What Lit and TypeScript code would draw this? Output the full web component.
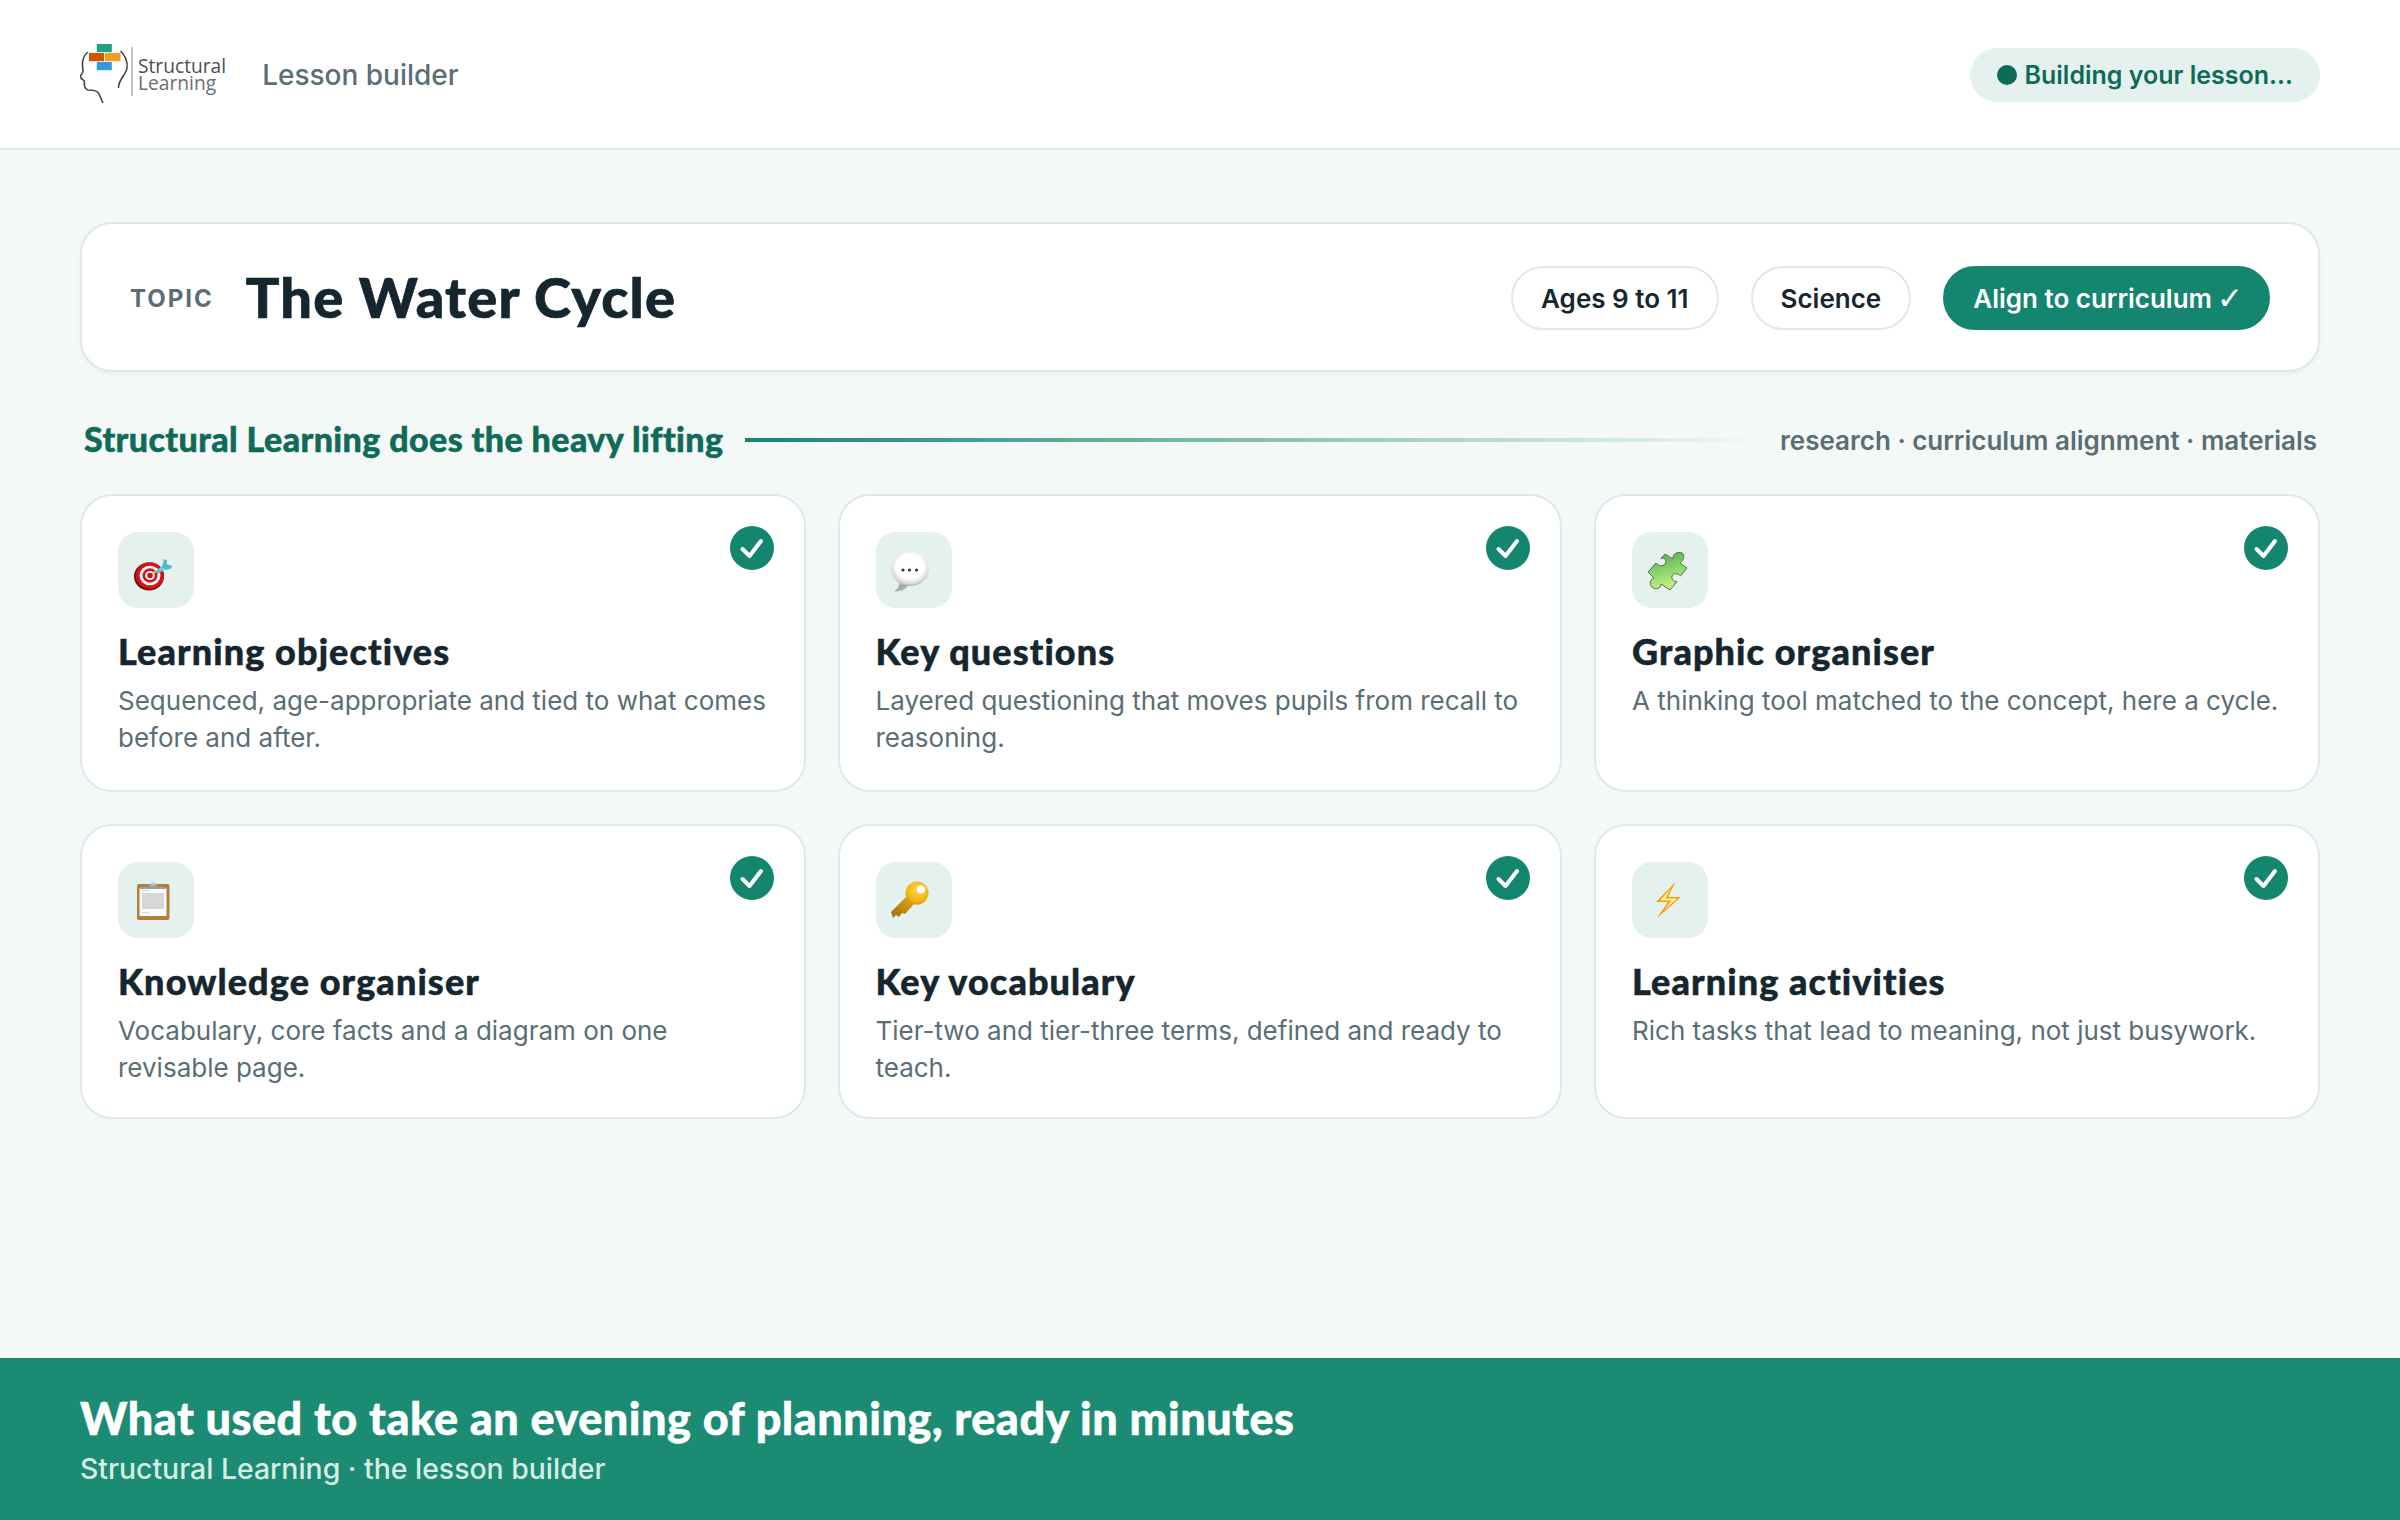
import { LitElement, html, css, svg } from 'lit';
import { customElement } from 'lit/decorators.js';

const ICONS = {
  target: svg`
    <defs>
      <linearGradient id="dartG" x1="0" y1="1" x2="1" y2="0"><stop offset="0" stop-color="#3fb4c4"/><stop offset="1" stop-color="#8fdde2"/></linearGradient>
    </defs>
    <ellipse cx="31" cy="44.5" rx="15" ry="14" fill="#7c0d0d"/>
    <ellipse cx="32" cy="43.5" rx="14" ry="13.2" fill="#d3151b"/>
    <ellipse cx="32" cy="43.5" rx="10.4" ry="9.8" fill="#fff"/>
    <ellipse cx="32" cy="43.5" rx="7.6" ry="7.2" fill="#d3151b"/>
    <ellipse cx="32" cy="43.5" rx="4.8" ry="4.6" fill="#fff"/>
    <ellipse cx="32" cy="43.5" rx="2.8" ry="2.7" fill="#c2151b"/>
    <path d="M35 41.5 L38 39" stroke="#f0b429" stroke-width="2.4"/>
    <path d="M37 40 L44.5 33.5 L47.5 37 L40 42 Z" fill="url(#dartG)"/>
    <path d="M44 35 L46 27 L49 28.5 L48.5 32 L54 34 L53 36.5 L47.5 38 Z" fill="#4fbccb"/>`,
  speech: svg`
    <defs>
      <radialGradient id="bubG" cx=".5" cy=".42" r=".58"><stop offset=".62" stop-color="#fff"/><stop offset=".9" stop-color="#d5d8d7"/><stop offset="1" stop-color="#a8adac"/></radialGradient>
    </defs>
    <path d="M24 48 Q24 55 18.5 59.5 Q27 60 33 53 Z" fill="#a9aead"/>
    <ellipse cx="34" cy="37" rx="19" ry="17" fill="url(#bubG)"/>
    <circle cx="27" cy="38" r="1.6" fill="#333"/><circle cx="33.5" cy="38" r="1.6" fill="#333"/><circle cx="40.5" cy="38" r="1.6" fill="#333"/>`,
  puzzle: svg`
    <defs>
      <linearGradient id="puzG" x1=".35" y1="0" x2=".6" y2="1"><stop offset="0" stop-color="#4fb556"/><stop offset="1" stop-color="#cdf585"/></linearGradient>
    </defs>
    <path d="M33 22 L41 27 C40 22 46 19 50 21 C53 23 52 28 48 31 L55 36 L48.5 44 C46 41 41 41 40 44 C39 47 42 50 45 49.5 L38 58 L29 52 C29 57 23 58 20 55 C17 52 18 47 22 46 L16 40 L24 31 C26 34 31 35 33 32 C35 29 33 25 29 26.5 Z" fill="url(#puzG)" stroke="#5c6f45" stroke-width="1"/>`,
  clipboard: svg`
    <defs>
      <linearGradient id="clipG" x1="0" y1="0" x2="0" y2="1"><stop offset="0" stop-color="#d5dce4"/><stop offset="1" stop-color="#8d98a5"/></linearGradient>
    </defs>
    <rect x="19" y="22" width="32.5" height="36" rx="2" fill="#b3803a"/>
    <rect x="21.5" y="26" width="27" height="28" fill="#fafafa"/>
    <rect x="24" y="31" width="22" height="16" fill="#c4c7ca" opacity=".7"/>
    <rect x="24" y="28" width="7" height="1" fill="#d2d4d6"/>
    <rect x="24" y="50" width="7" height="1" fill="#d2d4d6"/>
    <rect x="22" y="25" width="26" height="2" fill="#9aa0a6"/>
    <path d="M29 25.5 L32 23 C32 19 38 19 38 23 L41 25.5 Z" fill="url(#clipG)"/>`,
  key: svg`
    <defs>
      <radialGradient id="keyG" cx=".55" cy=".35" r=".75"><stop offset="0" stop-color="#ffd84a"/><stop offset=".7" stop-color="#f0b312"/><stop offset="1" stop-color="#b98008"/></radialGradient>
      <linearGradient id="keyS" x1="1" y1="0" x2="0" y2="1"><stop offset="0" stop-color="#e9ad12"/><stop offset="1" stop-color="#9c6c0a"/></linearGradient>
    </defs>
    <path d="M32 33 L15 50 L17 56 L20 53 L23 55 L26 51 L29 52 L38 42 Z" fill="url(#keyS)"/>
    <circle cx="41" cy="31" r="11.5" fill="url(#keyG)"/>
    <circle cx="45" cy="27.5" r="4" fill="#fff"/>`,
  zap: svg`
    <path d="M43.5 20 L24 40 L36 40 L25 56 L49 35 L36 35 Z" fill="#f59e0b"/>
    <path d="M39 26 L28 38.5 L39.5 38.5 L32 48 L45.5 36.5 L33.5 36.5 Z" fill="#fff2a0"/>`,
};

const CARDS = [
  { icon: ICONS.target, title: 'Learning objectives', desc: 'Sequenced, age-appropriate and tied to what comes before and after.' },
  { icon: ICONS.speech, title: 'Key questions', desc: 'Layered questioning that moves pupils from recall to reasoning.' },
  { icon: ICONS.puzzle, title: 'Graphic organiser', desc: 'A thinking tool matched to the concept, here a cycle.' },
  { icon: ICONS.clipboard, title: 'Knowledge organiser', desc: 'Vocabulary, core facts and a diagram on one revisable page.' },
  { icon: ICONS.key, title: 'Key vocabulary', desc: 'Tier-two and tier-three terms, defined and ready to teach.' },
  { icon: ICONS.zap, title: 'Learning activities', desc: 'Rich tasks that lead to meaning, not just busywork.' },
];

@customElement('app-root')
export class AppRoot extends LitElement {
  static styles = css`
    :host {
      display: block;
      font-family: 'Inter', sans-serif;
      color: #16262e;
    }

    .page {
      display: flex;
      flex-direction: column;
      min-height: 1520px;
      background: #f4f8f7;
    }

    /* header */
    .top {
      box-sizing: border-box;
      height: 150px;
      display: flex;
      align-items: center;
      justify-content: space-between;
      padding: 2px 80px 0;
      background: #fff;
      border-bottom: 2px solid #dcebe6;
    }
    .brand { display: flex; align-items: center; gap: 36px; }
    .logo { display: flex; align-items: center; margin-top: -4px; }
    .logo svg { display: block; width: 56px; height: 62px; }
    .logo-text {
      display: flex;
      flex-direction: column;
      margin: 2px 0 0 2px;
      font-family: 'Open Sans', sans-serif;
      font-size: 19.2px;
      line-height: 17px;
      color: #4a4f52;
    }
    .logo-text span + span { color: #6a6f72; }
    .crumb { font-size: 28px; font-weight: 500; color: #5a6e75; }
    .status {
      display: flex;
      align-items: center;
      gap: 8px;
      height: 54px;
      padding: 0 27px;
      border-radius: 27px;
      background: #e5f1ee;
      color: #0f6b57;
      font-size: 25px;
      font-weight: 600;
    }
    .dot { width: 20px; height: 20px; border-radius: 50%; background: #0f6b57; }

    /* main */
    main { flex: 1; display: flex; flex-direction: column; padding: 72px 80px 0; }

    .topic {
      box-sizing: border-box;
      height: 150px;
      display: flex;
      align-items: center;
      padding: 2px 48px 0;
      background: #fff;
      border: 2px solid #dcebe6;
      border-radius: 32px;
      box-shadow: 0 2px 4px rgba(20, 60, 50, 0.04);
    }
    .topic-label {
      font-size: 24px;
      font-weight: 700;
      letter-spacing: 2px;
      color: #5a6e75;
      margin-right: 32px;
    }
    .topic-title {
      flex: 1;
      padding-bottom: 4px;
      font-family: 'Lato', sans-serif;
      font-size: 56px;
      font-weight: 900;
      letter-spacing: 1.2px;
      -webkit-text-stroke: 0.7px #16262e;
    }
    .chip {
      box-sizing: border-box;
      height: 64px;
      display: flex;
      align-items: center;
      padding: 0 28px;
      margin-left: 32px;
      border: 2px solid #dcebe6;
      border-radius: 32px;
      background: #fff;
      font-size: 26px;
      font-weight: 600;
    }
    .chip.go { background: #14866f; border-color: #14866f; color: #fff; }
    .mark {
      margin: 0 -3px 0 5px;
      font-family: 'DejaVu Sans', sans-serif;
      font-size: 31px;
      line-height: 1;
      font-weight: 400;
    }

    .section {
      display: flex;
      align-items: center;
      height: 36px;
      margin: 50px 0 36px;
      padding: 0 3px 0 4px;
    }
    .section-title {
      padding-bottom: 4px;
      font-family: 'Lato', sans-serif;
      font-size: 34px;
      font-weight: 900;
      letter-spacing: 0.4px;
      color: #0f6b57;
      -webkit-text-stroke: 0.5px #0f6b57;
    }
    .rule {
      flex: 1;
      height: 4px;
      margin: 0 20px 0 21px;
      background: linear-gradient(90deg, #14866f, rgba(20, 134, 111, 0));
    }
    .section-note { font-size: 26px; font-weight: 600; color: #5a6e75; }

    .grid {
      display: grid;
      grid-template-columns: 725.5px 724.5px 726px;
      grid-template-rows: 298px 295px;
      gap: 32px;
    }
    .card {
      position: relative;
      box-sizing: border-box;
      padding: 36px;
      background: #fff;
      border: 2px solid #dcebe6;
      border-radius: 32px;
    }
    .tile {
      width: 76px;
      height: 76px;
      border-radius: 20px;
      background: #e5f1ee;
    }
    .tile svg { display: block; width: 76px; height: 76px; }
    .card h3 {
      margin: 21px 0 0;
      font-family: 'Lato', sans-serif;
      font-size: 36px;
      line-height: 44px;
      font-weight: 900;
      letter-spacing: 1.1px;
      -webkit-text-stroke: 0.5px #16262e;
    }
    .card p {
      margin: 9px 0 0;
      font-size: 26px;
      line-height: 37px;
      color: #5a6e75;
    }
    .tick { position: absolute; top: 30px; right: 30px; width: 44px; height: 44px; }

    /* footer */
    footer {
      box-sizing: border-box;
      height: 162px;
      padding: 33px 80px 0;
      background: #1b8b73;
      color: #fff;
    }
    .foot-title {
      font-family: 'Lato', sans-serif;
      font-size: 45px;
      line-height: 54px;
      font-weight: 900;
      letter-spacing: 0.5px;
      -webkit-text-stroke: 0.5px #fff;
    }
    .foot-sub { margin-top: 6px; font-size: 28.4px; line-height: 36px; font-weight: 500; color: #d6ece5; }
  `;

  render() {
    return html`
      <div class="page">
        <header class="top">
          <div class="brand">
            <div class="logo">
              <svg viewBox="0 0 56 62" fill="none">
                <path d="M8 10 C3 14 1.5 20 3 28 C3.5 31 0 33 0.5 35 C1 38 4.5 37 4.5 40 C4 44 4.5 47 8 48 C14 48 18 49 19 52 L23 61" stroke="#444" stroke-width="1.6"/>
                <path d="M40.5 9 C45 13 48 20 47 26 C46 33 38 38 38.5 46" stroke="#444" stroke-width="1.6"/>
                <rect x="16.8" y="2" width="15" height="8.2" fill="#1ea085"/>
                <rect x="9" y="11" width="15" height="8.2" fill="#d35400"/>
                <rect x="25" y="11" width="15.5" height="8.2" fill="#f39c1f"/>
                <rect x="16.8" y="20" width="15" height="8.2" fill="#3498db"/>
                <line x1="52" y1="5" x2="52" y2="54" stroke="#999" stroke-width="1.2"/>
              </svg>
              <div class="logo-text"><span>Structural</span><span>Learning</span></div>
            </div>
            <div class="crumb">Lesson builder</div>
          </div>
          <div class="status"><span class="dot"></span>Building your lesson...</div>
        </header>

        <main>
          <section class="topic">
            <span class="topic-label">TOPIC</span>
            <span class="topic-title">The Water Cycle</span>
            <span class="chip">Ages 9 to 11</span>
            <span class="chip">Science</span>
            <span class="chip go">Align to curriculum<span class="mark">✓</span></span>
          </section>

          <div class="section">
            <span class="section-title">Structural Learning does the heavy lifting</span>
            <span class="rule"></span>
            <span class="section-note">research · curriculum alignment · materials</span>
          </div>

          <div class="grid">
            ${CARDS.map(c => html`
              <article class="card">
                <div class="tile"><svg viewBox="0 0 76 76">${c.icon}</svg></div>
                <h3>${c.title}</h3>
                <p>${c.desc}</p>
                <svg class="tick" viewBox="0 0 44 44">
                  <circle cx="22" cy="22" r="22" fill="#14866f"/>
                  <path d="M12.5 23 L19.5 30 L31 15" fill="none" stroke="#fff" stroke-width="4" stroke-linecap="round" stroke-linejoin="round"/>
                </svg>
              </article>
            `)}
          </div>
        </main>

        <footer>
          <div class="foot-title">What used to take an evening of planning, ready in minutes</div>
          <div class="foot-sub">Structural Learning · the lesson builder</div>
        </footer>
      </div>
    `;
  }
}

declare global {
  interface HTMLElementTagNameMap { 'app-root': AppRoot; }
}
